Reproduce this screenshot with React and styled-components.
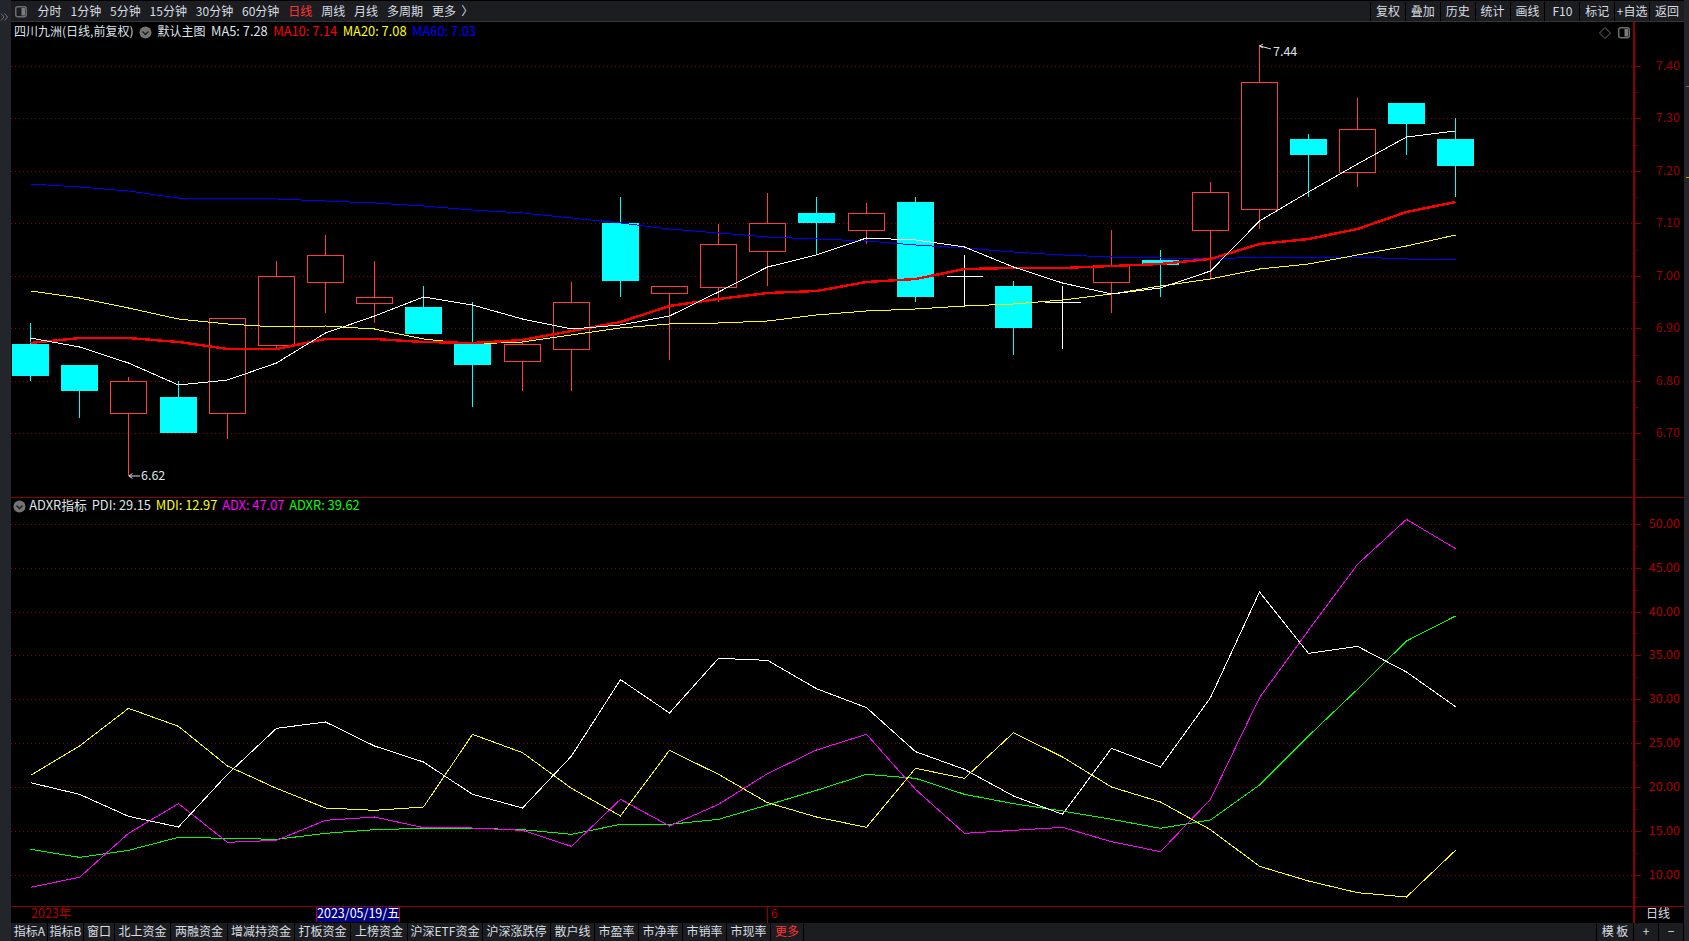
import React from "react";
import styled, { createGlobalStyle } from "styled-components";

const GlobalStyle = createGlobalStyle`
  html, body {
    margin: 0;
    padding: 0;
    background: #000;
    overflow: hidden;
  }
`;

const FONT = `"Noto Sans CJK SC", "Noto Sans", sans-serif`;
const BAR = "#1c1d20";
const STRIP = "#22252a";
const AXIS = "#8b0000";

const Page = styled.div`
  width: 1689px;
  height: 941px;
  display: flex;
  background: #000;
  font-family: ${FONT};
  font-size: 12px;
  color: #dde3ea;
  overflow: hidden;
`;

const LeftStrip = styled.div`
  width: 11px;
  flex: none;
  background: ${STRIP};
  padding-top: 7px;
  box-sizing: border-box;
`;

const RightStrip = styled.div`
  position: relative;
  width: 5px;
  flex: none;
  background: ${STRIP};
`;

const StripMark = styled.span`
  position: absolute;
  left: 2px;
  right: 0;
  top: ${(p) => p.$top}px;
  height: 1px;
  background: ${(p) => p.$color};
`;

const Workspace = styled.div`
  width: 1673px;
  display: flex;
  flex-direction: column;
`;

const Toolbar = styled.div`
  height: 22px;
  flex: none;
  box-sizing: border-box;
  padding-top: 1px;
  display: flex;
  align-items: stretch;
  background: ${BAR};
  border-bottom: 1px solid #34353a;
  border-top: 1px solid #000;
`;

const PeriodGroup = styled.div`
  display: flex;
  align-items: center;
  gap: 8.9px;
  padding-left: 4px;
`;

const PanelToggle = styled.div`
  display: flex;
  align-items: center;
  margin-right: 1.7px;
`;

const Period = styled.span`
  color: ${(p) => (p.$active ? "#ff3232" : "#d8dde3")};
  line-height: 18px;
  padding-bottom: 2px;
  white-space: nowrap;
`;

const ToolGroup = styled.div`
  margin-left: auto;
  display: flex;
`;

const ToolButton = styled.div`
  width: 34.9px;
  box-sizing: border-box;
  padding-bottom: 2px;
  display: flex;
  align-items: center;
  justify-content: center;
  border-left: 1px solid #000;
  color: #d8dde3;
  white-space: nowrap;
`;

const Panel = styled.div`
  height: ${(p) => p.$h}px;
  flex: none;
  display: flex;
  border-bottom: 1px solid ${AXIS};
`;

const Plot = styled.div`
  position: relative;
  width: 1622px;
  flex: none;
  svg {
    display: block;
  }
`;

const Legend = styled.div`
  position: absolute;
  left: ${(p) => p.$left}px;
  top: 0;
  height: ${(p) => p.$h}px;
  display: flex;
  align-items: center;
  gap: ${(p) => p.$gap}px;
  white-space: nowrap;
`;

const LegendItem = styled.span`
  color: ${(p) => p.$color || "#dde3ea"};
  font-size: ${(p) => (p.$data ? "12.85px" : "12px")};
`;

const ChevronWrap = styled.span`
  display: flex;
  margin-right: ${(p) => p.$gap || 0}px;
  padding-top: ${(p) => p.$down || 0}px;
`;

const AxisColumn = styled.div`
  width: 51px;
  flex: none;
  box-sizing: border-box;
  border-left: 2px solid ${AXIS};
  svg {
    display: block;
  }
`;

const AxisText = styled.text`
  font-family: ${FONT};
  font-size: 12.5px;
  fill: ${(p) => p.$color};
`;

const PriceNote = styled.text`
  font-family: ${FONT};
  font-size: 12.5px;
  fill: #dde3ea;
`;

const TimeAxis = styled.div`
  height: 16px;
  flex: none;
  display: flex;
  align-items: stretch;
  line-height: 11px;
  font-size: 12.5px;
`;

const YearMark = styled.span`
  margin-left: 20px;
  width: 39px;
  color: #b00000;
  white-space: nowrap;
`;

const DateTag = styled.span`
  margin-left: 246px;
  width: 84px;
  box-sizing: border-box;
  height: 15px;
  border-left: 1px solid #b00030;
  border-right: 1px solid #b00030;
  background: #000080;
  color: #fff;
  text-align: center;
  white-space: nowrap;
`;

const MonthMark = styled.span`
  margin-left: 367px;
  padding-left: 3px;
  border-left: 1px solid ${AXIS};
  color: #b00000;
`;

const CycleCell = styled.div`
  margin-left: auto;
  width: 51px;
  box-sizing: border-box;
  border-left: 2px solid ${AXIS};
  padding-left: 11px;
  font-size: 12px;
  color: #d8dde3;
`;

const TabBar = styled.div`
  height: 18px;
  flex: none;
  display: flex;
  background: ${BAR};
  padding-left: 1px;
`;

const Tab = styled.div`
  width: ${(p) => p.$w}px;
  flex: none;
  box-sizing: border-box;
  padding-bottom: 4px;
  border-right: 1px solid #000;
  display: flex;
  align-items: center;
  justify-content: center;
  color: ${(p) => (p.$accent ? "#ff3232" : "#d8dde3")};
  white-space: nowrap;
`;

const TabSpacer = styled.div`
  flex: 1;
  border-right: 1px solid #000;
`;

const xAt = (i) => Math.round(30.2 + 49.14 * i) + 0.5;
const low = (v) => 500 + v / 3;
const pts = (arr) => arr.map((y, i) => `${xAt(i)},${y}`).join(" ");

// top wick, body top, body bottom, bottom wick, kind
const candles = [
  [323, 344, 376, 381, "d"],
  [365, 365, 391, 418, "d"],
  [377, 381, 413, 476, "u"],
  [381, 397, 433, 433, "d"],
  [318, 318, 413, 439, "u"],
  [261, 276, 345, 349, "u"],
  [235, 255, 282, 313, "u"],
  [261, 297, 303, 323, "u"],
  [286, 307, 334, 334, "d"],
  [302, 344, 365, 407, "d"],
  [342, 344, 361, 391, "u"],
  [282, 302, 349, 391, "u"],
  [197, 223, 281, 297, "d"],
  [286, 286, 293, 360, "u"],
  [224, 244, 287, 302, "u"],
  [193, 223, 251, 286, "u"],
  [197, 213, 223, 255, "d"],
  [203, 213, 230, 244, "u"],
  [197, 202, 297, 302, "d"],
  [255, 276, 276, 307, "w"],
  [281, 286, 328, 355, "d"],
  [286, 302, 302, 349, "w"],
  [230, 265, 282, 313, "u"],
  [250, 260, 265, 297, "d"],
  [182, 192, 230, 280, "u"],
  [45, 82, 209, 229, "u"],
  [134, 139, 155, 197, "d"],
  [98, 129, 172, 187, "u"],
  [103, 103, 124, 155, "d"],
  [118, 139, 166, 197, "d"],
];

const ma5 = [338, 347, 363, 385, 380, 363, 333, 316, 297, 305, 319, 329, 325, 316, 292, 267, 255, 238, 240, 247, 267, 283, 294, 288, 271, 221, 192, 164, 137, 131];
const ma10 = [343, 338, 338, 342, 349, 349, 339, 339, 342, 343, 340, 331, 322, 306, 299, 293, 291, 282, 279, 269, 268, 268, 266, 264, 259, 244, 239, 229, 212, 202];
const ma20 = [291, 298, 308, 319, 324, 327, 326, 329, 339, 344, 342, 335, 328, 324, 323, 321, 315, 311, 309, 306, 304, 300, 294, 286, 279, 269, 264, 255, 246, 235];
const ma60 = [184, 187, 191, 198, 198, 199, 201, 203, 206, 210, 213, 218, 223, 229, 233, 237, 239, 241, 245, 248, 252, 255, 257, 258, 259, 257, 257, 257, 259, 260];

const pdi = [845, 880, 946, 978, 820, 682, 663, 735, 783, 880, 921, 765, 536, 636, 472, 478, 563, 620, 752, 805, 885, 940, 742, 798, 590, 273, 457, 436, 513, 617].map(low);
const mdi = [823, 735, 622, 676, 795, 862, 921, 928, 918, 700, 755, 862, 945, 748, 820, 905, 948, 979, 802, 832, 695, 768, 858, 903, 986, 1096, 1140, 1175, 1188, 1048].map(low);
const adx = [1159, 1129, 997, 908, 1024, 1018, 958, 948, 980, 981, 988, 1036, 895, 975, 910, 818, 747, 700, 865, 997, 988, 979, 1022, 1052, 895, 590, 388, 190, 55, 143].map(low);
const adxr = [1045, 1069, 1048, 1009, 1012, 1015, 997, 986, 982, 982, 986, 1000, 970, 970, 955, 912, 868, 820, 832, 880, 908, 930, 955, 982, 957, 852, 705, 565, 420, 345].map(low);

const priceTicks = [
  ["7.40", 66], ["7.30", 118], ["7.20", 171], ["7.10", 223], ["7.00", 276],
  ["6.90", 328], ["6.80", 381], ["6.70", 433],
];
const adxTicks = [
  ["50.00", 523], ["45.00", 567], ["40.00", 611], ["35.00", 654], ["30.00", 698],
  ["25.00", 742], ["20.00", 786], ["15.00", 830], ["10.00", 874],
];

const periods = ["分时", "1分钟", "5分钟", "15分钟", "30分钟", "60分钟", "日线", "周线", "月线", "多周期", "更多\u00a0\u00a0〉"];
const tools = ["复权", "叠加", "历史", "统计", "画线", "F10", "标记", "+自选", "返回"];
const tabs = [
  ["指标A", 36], ["指标B", 36], ["窗口", 31], ["北上资金", 56], ["两融资金", 57], ["增减持资金", 67],
  ["打板资金", 56], ["上榜资金", 57], ["沪深ETF资金", 75], ["沪深涨跌停", 68], ["散户线", 44],
  ["市盈率", 44], ["市净率", 44], ["市销率", 44], ["市现率", 44], ["更多", 33],
];

const GridLines = ({ ticks }) =>
  ticks.map(([label, y]) => (
    <line key={label} x1="11" x2="1633" y1={y + 0.5} y2={y + 0.5} stroke="#8a0000" strokeDasharray="1 3" />
  ));

const Candle = ({ data, i }) => {
  const [top, bodyTop, bodyBottom, bottom, kind] = data;
  const x = xAt(i);
  if (kind === "w") {
    return (
      <g stroke="#fff">
        <line x1={x} x2={x} y1={top} y2={bottom} />
        <line x1={x - 18} x2={x + 18} y1={bodyTop + 0.5} y2={bodyTop + 0.5} />
      </g>
    );
  }
  const color = kind === "u" ? "#ff3c3c" : "#00ffff";
  return (
    <g>
      <line x1={x} x2={x} y1={top} y2={bottom} stroke={color} />
      {kind === "u" ? (
        <rect x={x - 18} y={bodyTop + 0.5} width="36" height={bodyBottom - bodyTop} fill="#000" stroke={color} />
      ) : (
        <rect x={x - 18.5} y={bodyTop} width="37" height={bodyBottom - bodyTop} fill={color} />
      )}
    </g>
  );
};

const Series = ({ data, color, width = 1 }) => (
  <polyline points={pts(data)} fill="none" stroke={color} strokeWidth={width} />
);

const ChevronDot = () => (
  <svg width="13" height="13" viewBox="0 0 13 13">
    <circle cx="6.5" cy="6.5" r="6" fill="#747474" />
    <polyline points="3.5,5.5 6.5,8.5 9.5,5.5" fill="none" stroke="#1a1a1a" strokeWidth="1.4" />
  </svg>
);

const SplitSquare = ({ x = 0, y = 0 }) => (
  <g transform={`translate(${x} ${y})`}>
    <rect x="0.75" y="0.75" width="10.5" height="10" rx="2" fill="none" stroke="#6c6c6c" strokeWidth="1.5" />
    <rect x="6.5" y="2" width="3.5" height="7.5" fill="#7c7c7c" />
  </g>
);

const Axis = ({ ticks, minors, top, height, color }) => (
  <AxisColumn>
    <svg width="49" height={height} viewBox={`1635 ${top} 49 ${height}`} shapeRendering="crispEdges">
      {ticks.map(([label, y]) => (
        <line key={label} x1="1635" x2="1641" y1={y + 0.5} y2={y + 0.5} stroke={AXIS} />
      ))}
      {minors.map((y) => (
        <line key={y} x1="1635" x2="1638" y1={y + 0.5} y2={y + 0.5} stroke="#5a0000" />
      ))}
      {ticks.map(([label, y]) => (
        <AxisText key={label} x="1680" y={y - 1.5} textAnchor="end" dominantBaseline="central" $color={color} shapeRendering="auto">
          {label}
        </AxisText>
      ))}
    </svg>
  </AxisColumn>
);

const App = () => {
  return (
    <Page>
      <GlobalStyle />
      <LeftStrip>
        <svg width="9" height="8" viewBox="0 0 9 8">
          <polyline points="1,0.5 4,4 1,7.5" fill="none" stroke="#6f7278" />
          <polyline points="4.5,0.5 7.5,4 4.5,7.5" fill="none" stroke="#6f7278" />
        </svg>
      </LeftStrip>
      <Workspace>
        <Toolbar>
          <PeriodGroup>
            <PanelToggle>
              <svg width="12" height="12" viewBox="0 0 12 12">
                <SplitSquare />
              </svg>
            </PanelToggle>
            {periods.map((name) => (
              <Period key={name} $active={name === "日线"}>
                {name}
              </Period>
            ))}
          </PeriodGroup>
          <ToolGroup>
            {tools.map((name) => (
              <ToolButton key={name}>{name}</ToolButton>
            ))}
          </ToolGroup>
        </Toolbar>

        <Panel $h={475}>
          <Plot>
            <svg width="1622" height="474" viewBox="11 22 1622 474" shapeRendering="crispEdges">
              <GridLines ticks={priceTicks} />
              {candles.map((c, i) => (
                <Candle key={i} data={c} i={i} />
              ))}
              <Series data={ma60} color="#0000ff" />
              <Series data={ma20} color="#ffff00" />
              <Series data={ma10} color="#ff0000" width={2.4} />
              <Series data={ma5} color="#ffffff" />

              <g stroke="#dde3ea" fill="none" shapeRendering="auto">
                <polyline points="1260,46 1271,49" />
                <polyline points="1263,44 1259.5,46 1263,48" />
                <polyline points="129,476 140,476" />
                <polyline points="132.5,473.5 129,476 132.5,478.5" />
              </g>
              <PriceNote x="1273" y="50" dominantBaseline="central" shapeRendering="auto">7.44</PriceNote>
              <PriceNote x="141" y="474" dominantBaseline="central" shapeRendering="auto">6.62</PriceNote>

              <g shapeRendering="auto">
                <polygon points="1605,27.5 1610.5,33 1605,38.5 1599.5,33" fill="none" stroke="#6c6c6c" />
                <SplitSquare x={1618} y={27} />
              </g>
            </svg>
            <Legend $left={3} $h={17} $gap={5.5}>
              <LegendItem>四川九洲(日线,前复权)</LegendItem>
              <ChevronWrap $down={3}>
                <ChevronDot />
              </ChevronWrap>
              <LegendItem>默认主图</LegendItem>
              <LegendItem $data>MA5: 7.28</LegendItem>
              <LegendItem $data $color="#ff0000">MA10: 7.14</LegendItem>
              <LegendItem $data $color="#ffff00">MA20: 7.08</LegendItem>
              <LegendItem $data $color="#0000ff">MA60: 7.03</LegendItem>
            </Legend>
          </Plot>
          <Axis
            ticks={priceTicks}
            minors={[92, 145, 197, 250, 302, 355, 407, 459]}
            top={22}
            height={474}
            color="#9a0000"
          />
        </Panel>

        <Panel $h={408}>
          <Plot>
            <svg width="1622" height="407" viewBox="11 497 1622 407" shapeRendering="crispEdges">
              <GridLines ticks={adxTicks} />
              <Series data={adxr} color="#00ff00" />
              <Series data={adx} color="#ff00ff" />
              <Series data={mdi} color="#ffff00" />
              <Series data={pdi} color="#ffffff" />
            </svg>
            <Legend $left={2} $h={13} $gap={4.8}>
              <ChevronWrap $gap={-1.5} $down={3}>
                <ChevronDot />
              </ChevronWrap>
              <LegendItem $data>ADXR指标</LegendItem>
              <LegendItem $data>PDI: 29.15</LegendItem>
              <LegendItem $data $color="#ffff00">MDI: 12.97</LegendItem>
              <LegendItem $data $color="#ff00ff">ADX: 47.07</LegendItem>
              <LegendItem $data $color="#00ff00">ADXR: 39.62</LegendItem>
            </Legend>
          </Plot>
          <Axis
            ticks={adxTicks}
            minors={[545, 589, 632, 676, 720, 764, 808, 852, 896]}
            top={497}
            height={407}
            color="#b00000"
          />
        </Panel>

        <TimeAxis>
          <YearMark>2023年</YearMark>
          <DateTag>2023/05/19/五</DateTag>
          <MonthMark>6</MonthMark>
          <CycleCell>日线</CycleCell>
        </TimeAxis>

        <TabBar>
          {tabs.map(([name, w]) => (
            <Tab key={name} $w={w} $accent={name === "更多"}>
              {name}
            </Tab>
          ))}
          <TabSpacer />
          <Tab $w={37}>模 板</Tab>
          <Tab $w={25}>+</Tab>
          <Tab $w={25}>−</Tab>
        </TabBar>
      </Workspace>
      <RightStrip>
        <StripMark $top={86} $color="#6c6c6c" />
        <StripMark $top={177} $color="#c8a000" />
        <StripMark $top={531} $color="#8b0000" />
      </RightStrip>
    </Page>
  );
};

export default App;
